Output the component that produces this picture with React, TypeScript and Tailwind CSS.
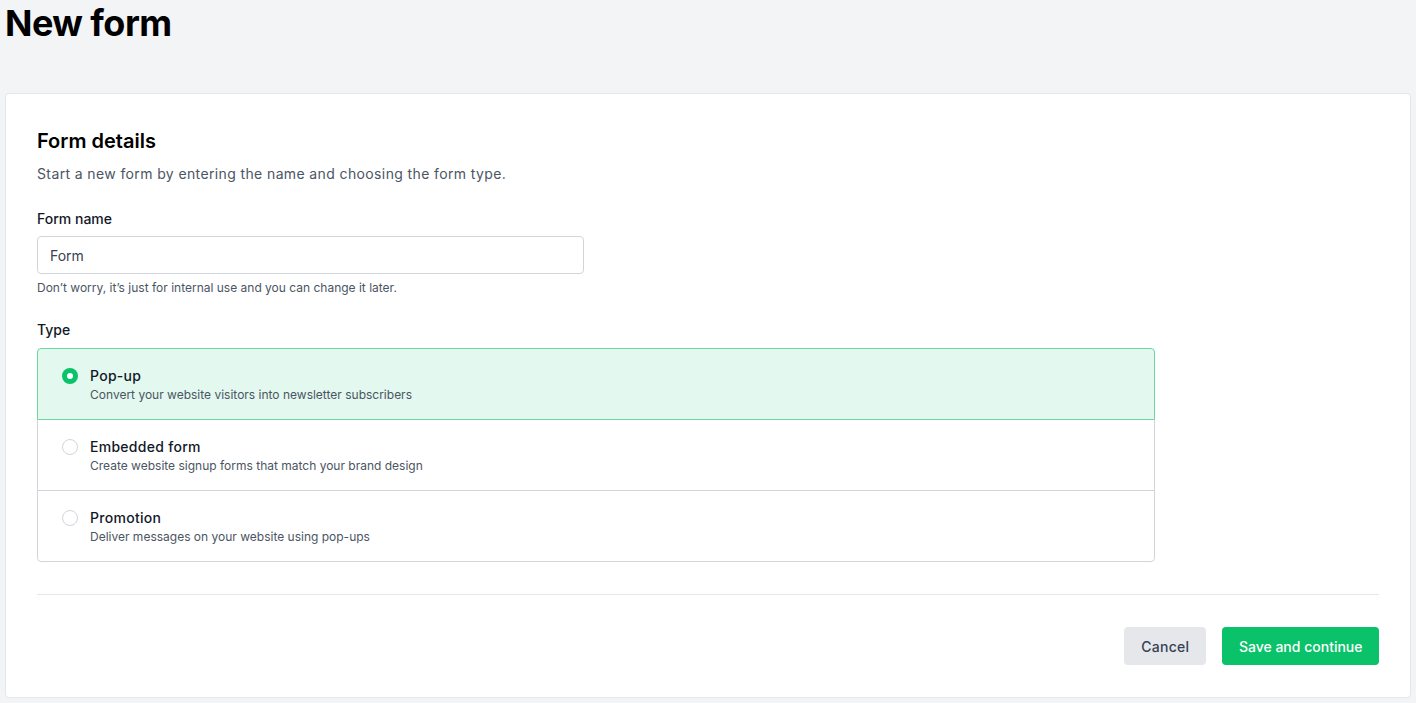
import { useState } from 'react';

const TYPES = [
  { id: 'popup', title: 'Pop-up', description: 'Convert your website visitors into newsletter subscribers' },
  { id: 'embedded', title: 'Embedded form', description: 'Create website signup forms that match your brand design' },
  { id: 'promotion', title: 'Promotion', description: 'Deliver messages on your website using pop-ups' },
];

export default function App() {
  const [name, setName] = useState('Form');
  const [type, setType] = useState('popup');

  return (
    <div className="min-h-screen bg-[#f3f4f6] px-[5px] pb-[6px] text-black font-['Inter',sans-serif]">
      <h1 className="pt-[1px] text-[36px] font-bold leading-[44px] tracking-[-0.015em]">New form</h1>

      <div className="mt-[48px] rounded-[4px] border border-[#e5e7eb] bg-white px-[31px] pt-[32px] pb-[32px]">
        <h2 className="text-[20px] font-semibold leading-[30px]">Form details</h2>
        <p className="mt-[8px] text-[14px] leading-[20px] tracking-[0.027em] text-[#4b5563]">
          Start a new form by entering the name and choosing the form type.
        </p>

        <label className="mt-[25px] block text-[14px] font-medium leading-[20px] text-[#111827]">Form name</label>
        <input
          value={name}
          onChange={e => setName(e.target.value)}
          className="mt-[7px] block h-[38px] w-[547px] rounded-[4px] border border-[#d1d5db] px-[12px] text-[14px] text-[#374151] outline-none"
        />
        <p className="mt-[6px] text-[12px] leading-[16px] text-[#4b5563]">
          Don’t worry, it’s just for internal use and you can change it later.
        </p>

        <p className="mt-[24px] text-[14px] font-medium leading-[20px] text-[#111827]">Type</p>
        <div className="mt-[8px] flex w-[1118px] flex-col">
          {TYPES.map((t, i) => {
            const active = t.id === type;
            return (
              <button
                key={t.id}
                onClick={() => setType(t.id)}
                className={
                  'flex h-[72px] w-full items-start gap-[12px] border px-[24px] pt-[17px] text-left ' +
                  (i > 0 ? '-mt-px ' : 'rounded-t-[4px] ') +
                  (i === TYPES.length - 1 ? 'rounded-b-[4px] ' : '') +
                  (active ? 'relative z-10 border-[#6ad6a0] bg-[#e3f8ee]' : 'border-[#d1d5db] bg-white')
                }
              >
                <span
                  className={
                    'mt-[2px] flex h-[16px] w-[16px] shrink-0 items-center justify-center rounded-full ' +
                    (active ? 'bg-[#09c269]' : 'border border-[#d1d5db] bg-white')
                  }
                >
                  {active && <span className="h-[6px] w-[6px] rounded-full bg-white" />}
                </span>
                <span className="flex flex-col">
                  <span className="text-[14px] font-medium leading-[20px] tracking-[0.02em] text-[#111827]">{t.title}</span>
                  <span className="text-[12px] leading-[18px] text-[#4b5563]">{t.description}</span>
                </span>
              </button>
            );
          })}
        </div>

        <div className="mt-[32px] border-t border-[#e5e7eb]" />

        <div className="mt-[32px] flex justify-end gap-[16px]">
          <button className="h-[38px] rounded-[4px] bg-[#e5e7eb] px-[17px] text-[14px] font-medium tracking-[0.02em] text-[#374151]">Cancel</button>
          <button className="h-[38px] rounded-[4px] bg-[#09c269] px-[16.5px] text-[14px] font-medium text-white">Save and continue</button>
        </div>
      </div>
    </div>
  );
}
